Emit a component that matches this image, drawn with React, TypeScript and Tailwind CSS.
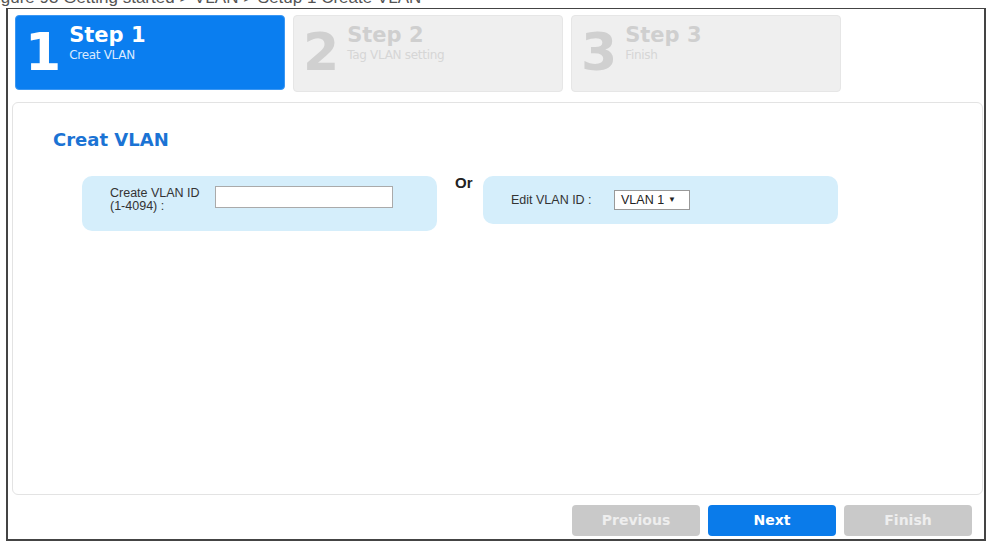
import React from "react";

const verd = { fontFamily: '"DejaVu Sans", Verdana, sans-serif' };
const arial = { fontFamily: '"Liberation Sans", Arial, sans-serif' };

function Step({ n, title, sub, active, h }: { n: string; title: string; sub: string; active?: boolean; h: string }) {
  return (
    <div
      className={
        "w-[270px] rounded-[4px] flex items-start pl-[9px] pt-[6px] " +
        h +
        " " +
        (active ? "bg-[#0a7ef0] border border-[#3b97f3]" : "bg-[#efefef] border border-[#e6e6e6]")
      }
      style={verd}
    >
      <div
        className={"text-[52px] font-bold leading-[60px] tracking-[-2px] " + (active ? "text-white" : "text-[#d0d0d0]")}
      >
        {n}
      </div>
      <div className="ml-[10px] mt-[1px] flex flex-col">
        <div className={"text-[21px] font-bold leading-[25px] " + (active ? "text-white" : "text-[#cfcfcf]")}>{title}</div>
        <div className={"text-[12px] leading-[15px] tracking-[-0.3px] " + (active ? "text-[#dbeaff]" : "text-[#d6d6d6]")}>{sub}</div>
      </div>
    </div>
  );
}

function Btn({ label, active }: { label: string; active?: boolean }) {
  return (
    <div
      className={
        "w-[128px] h-[31px] rounded-[4px] flex items-center justify-center text-[14px] font-bold " +
        (active ? "bg-[#0a7bea] text-white" : "bg-[#c9c9c9] text-[#eeeeee]")
      }
      style={verd}
    >
      {label}
    </div>
  );
}

export default function App() {
  return (
    <div className="w-[993px] h-[542px] bg-white overflow-hidden">
      <div className="h-[7px] overflow-hidden">
        <div className="mt-[-12px] ml-[-3px] text-[17px] leading-[20px] text-[#555] whitespace-nowrap" style={arial}>
          igure 93 Getting started &gt; VLAN &gt; Setup 1 Create VLAN
        </div>
      </div>
      <div className="ml-[6px] mt-[1px] w-[980px] h-[533px] border-2 border-t border-[#444] flex flex-col">
        <div className="flex items-start gap-[8px] ml-[7px] mt-[6px]">
          <Step n="1" title="Step 1" sub="Creat VLAN" active h="h-[75px]" />
          <Step n="2" title="Step 2" sub="Tag VLAN setting" h="h-[77px]" />
          <Step n="3" title="Step 3" sub="Finish" h="h-[77px]" />
        </div>
        <div className="ml-[4px] mt-[10px] w-[971px] h-[393px] border border-[#e3e3e3] rounded-[6px] pl-[40px] pt-[26px]">
          <div className="text-[18px] font-bold leading-[22px] text-[#1b73d4]" style={verd}>
            Creat VLAN
          </div>
          <div className="flex items-start mt-[25px] ml-[29px]">
            <div className="w-[355px] h-[55px] rounded-[10px] bg-[#d5eefb] flex items-start pl-[28px] pt-[10px]">
              <div className="text-[12.5px] leading-[13px] text-[#333] mt-[1px] w-[105px]" style={arial}>
                Create VLAN ID
                <br />
                (1-4094) :
              </div>
              <div className="w-[178px] h-[22px] bg-white border border-[#aaa]" />
            </div>
            <div className="w-[46px] pl-[18px] text-[15px] font-bold leading-[14px] text-[#222]" style={arial}>
              Or
            </div>
            <div className="w-[355px] h-[48px] rounded-[10px] bg-[#d5eefb] flex items-center pl-[28px]">
              <div className="text-[12.5px] text-[#333] w-[103px]" style={arial}>
                Edit VLAN ID :
              </div>
              <div
                className="w-[76px] h-[20px] bg-white border border-[#999] flex items-center pl-[6px] text-[12.5px] text-[#222]"
                style={arial}
              >
                VLAN 1 <span className="ml-[4px] text-[8px]">▼</span>
              </div>
            </div>
          </div>
        </div>
        <div className="flex justify-end gap-[8px] mt-[10px] mr-[12px]">
          <Btn label="Previous" />
          <Btn label="Next" active />
          <Btn label="Finish" />
        </div>
      </div>
    </div>
  );
}
